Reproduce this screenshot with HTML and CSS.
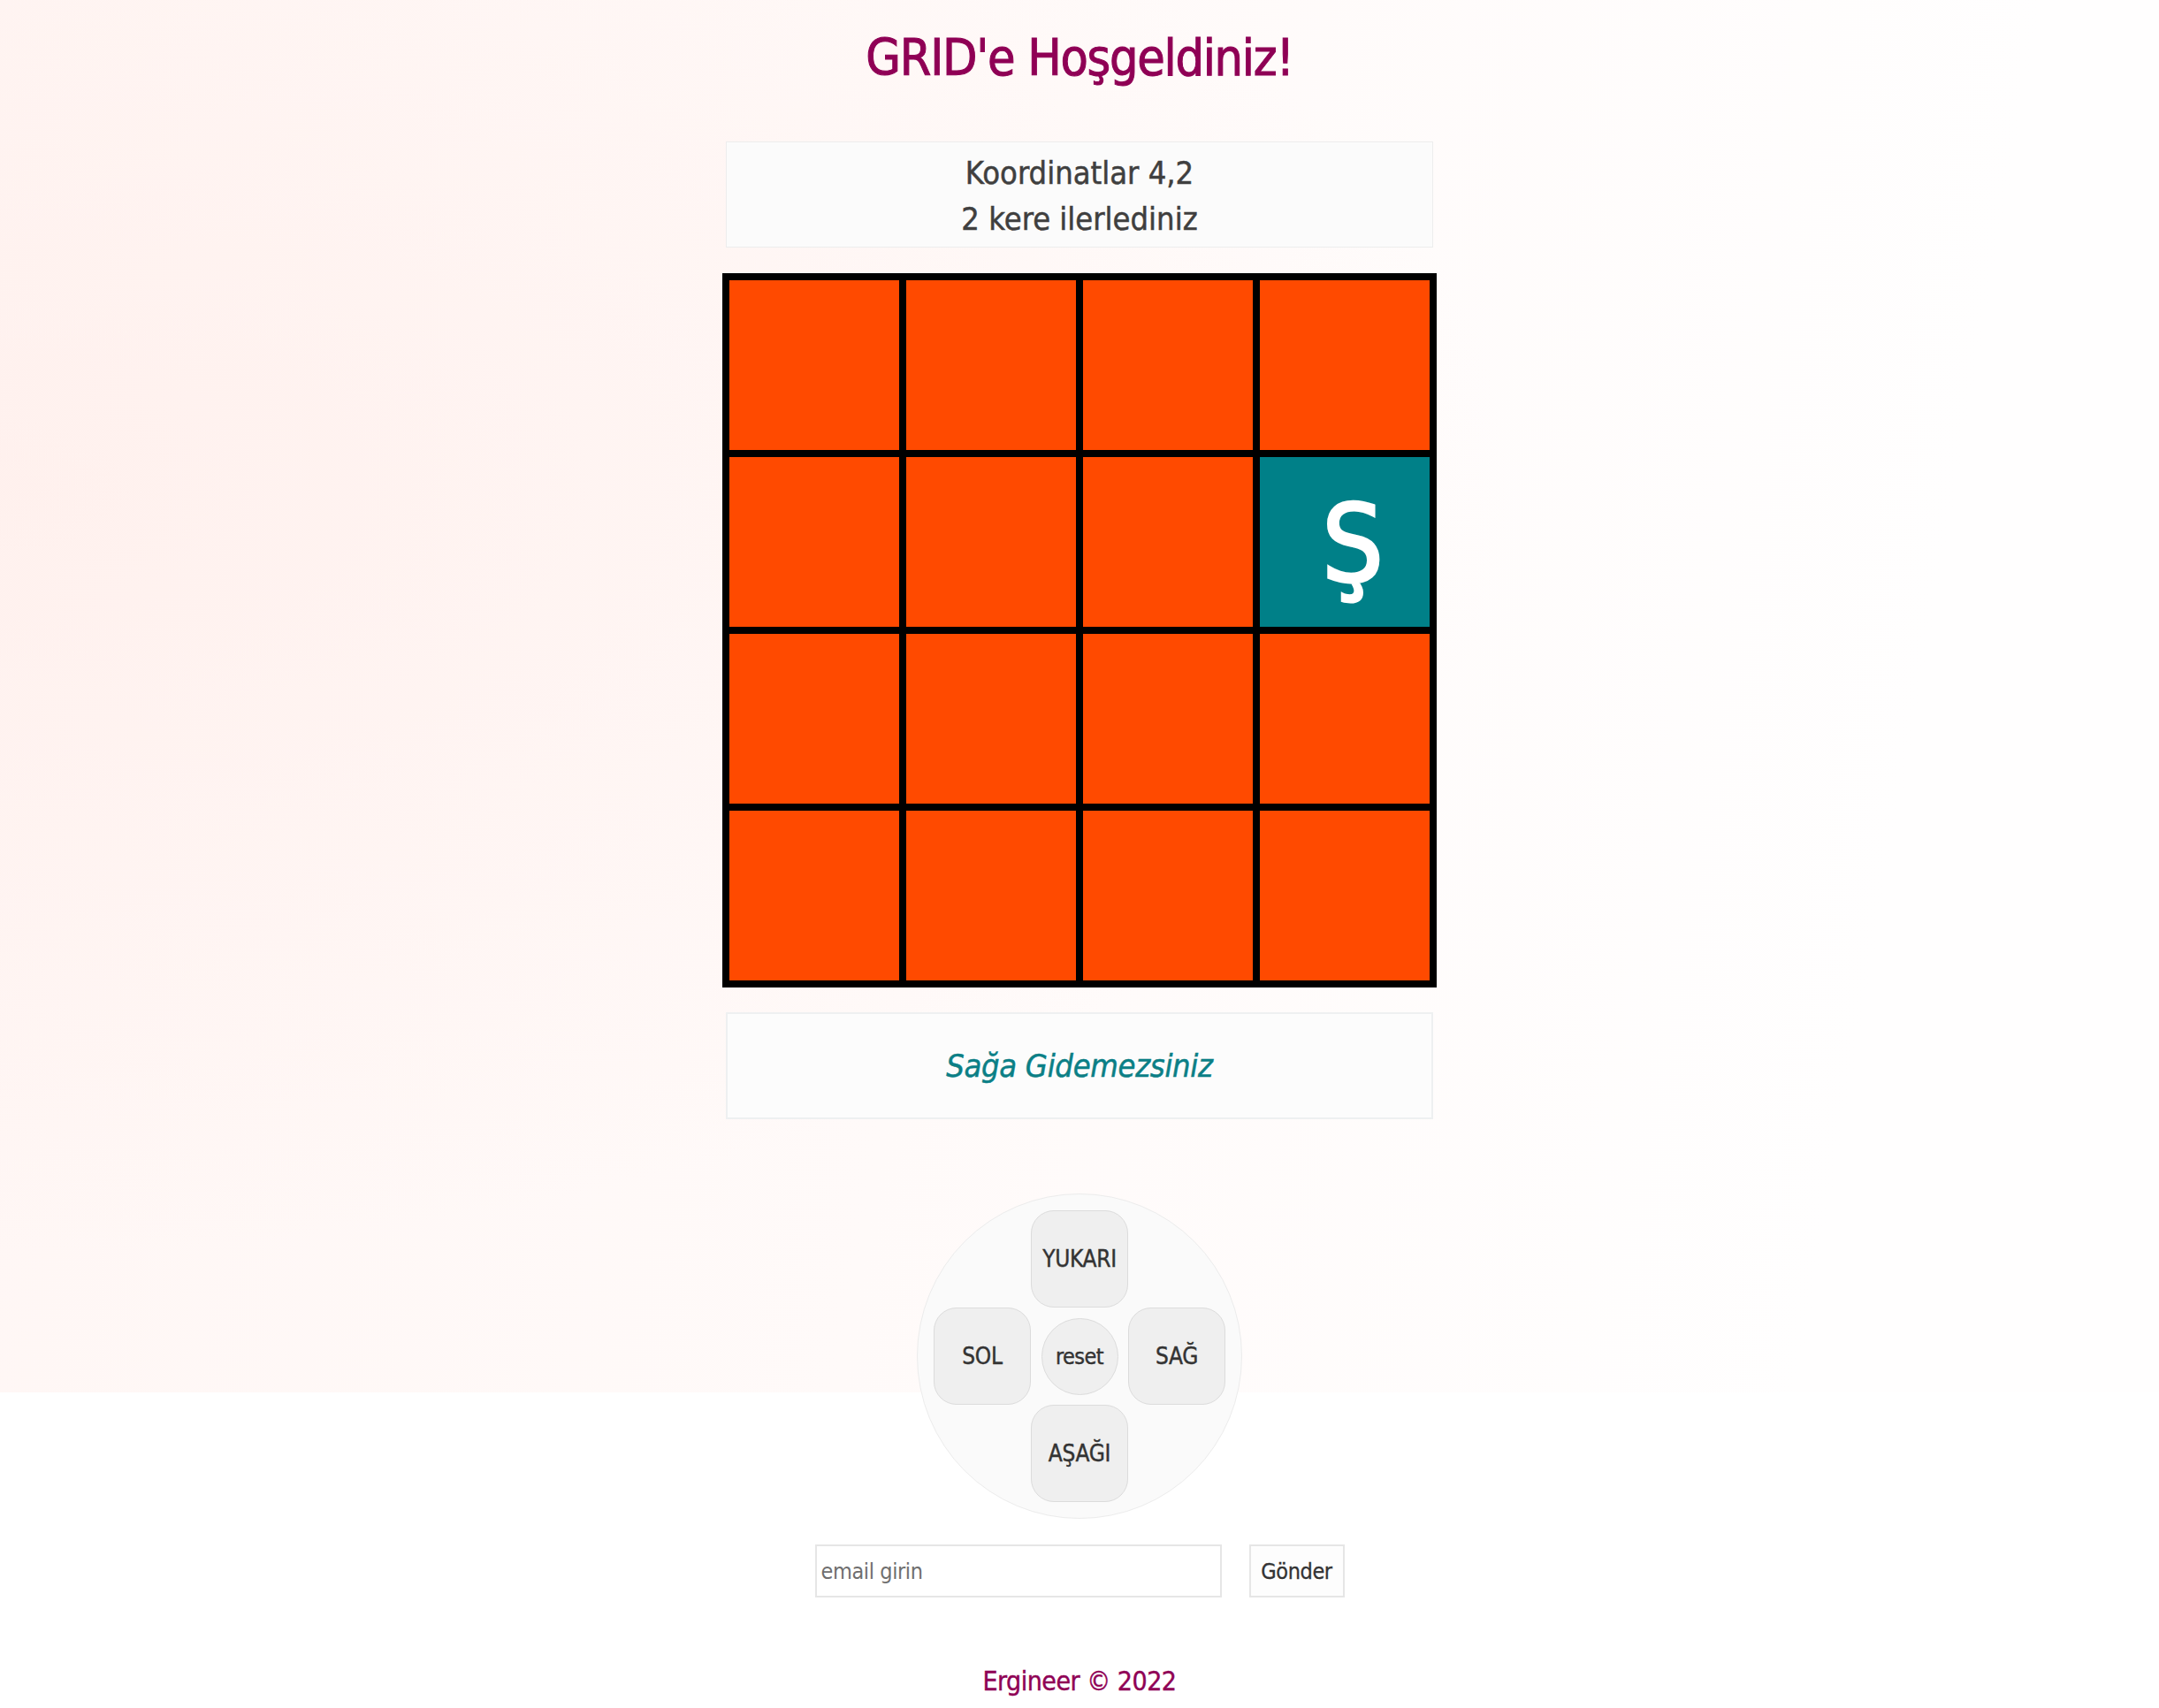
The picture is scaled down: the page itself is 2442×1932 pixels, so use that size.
FILE: index.html
```html
<!DOCTYPE html>
<html lang="tr">
<head>
<meta charset="utf-8">
<title>GRID</title>
<link rel="stylesheet" href="styles.css">
</head>
<body>
<main class="app">
  <h1 class="title">GRID'e Hoşgeldiniz!</h1>
  <div class="info">
    <div class="info-line">Koordinatlar 4,2</div>
    <div class="info-line">2 kere ilerlediniz</div>
  </div>
  <div class="grid">
    <div class="cell"></div><div class="cell"></div><div class="cell"></div><div class="cell"></div>
    <div class="cell"></div><div class="cell"></div><div class="cell"></div><div class="cell active">Ş</div>
    <div class="cell"></div><div class="cell"></div><div class="cell"></div><div class="cell"></div>
    <div class="cell"></div><div class="cell"></div><div class="cell"></div><div class="cell"></div>
  </div>
  <div class="message">Sağa Gidemezsiniz</div>
  <div class="pad">
    <div class="pad-grid">
      <span class="slot"></span>
      <button class="btn" type="button">YUKARI</button>
      <span class="slot"></span>
      <button class="btn" type="button">SOL</button>
      <button class="btn reset" type="button">reset</button>
      <button class="btn" type="button">SAĞ</button>
      <span class="slot"></span>
      <button class="btn" type="button">AŞAĞI</button>
      <span class="slot"></span>
    </div>
  </div>
  <form class="email">
    <input class="email-input" type="email" placeholder="email girin">
    <button class="email-submit" type="button">Gönder</button>
  </form>
  <footer class="footer">Ergineer © 2022</footer>
</main>
</body>
</html>
```

FILE: styles.css
```css
* { box-sizing: border-box; }

html { background: #ffffff; }

body {
  margin: 0;
  font-family: "DejaVu Sans Condensed", "Liberation Sans Narrow", "Roboto", sans-serif;
  color: #3d3d3d;
  background-color: #ffffff;
  background-image:
    radial-gradient(ellipse 70% 55% at 0% 35%, rgba(255, 236, 232, 0.55) 0%, rgba(255, 240, 236, 0) 100%),
    linear-gradient(100deg, #fff6f4 0%, #fffaf9 45%, #fffefe 85%);
  background-repeat: no-repeat;
  background-size: 100% 1575px;
}

.app {
  display: flex;
  flex-direction: column;
  align-items: center;
}

.title {
  margin: 30px 0 0;
  height: 70px;
  font-size: 57px;
  line-height: 70px;
  letter-spacing: -1.3px;
  font-weight: normal;
  color: #8f0055;
  -webkit-text-stroke: 1px #8f0055;
}

.info {
  margin-top: 60px;
  width: 800px;
  height: 120px;
  padding: 9px 0 5px;
  border: 1px solid #ededed;
  background: #fbfbfb;
  text-align: center;
  font-size: 36px;
  line-height: 52px;
  color: #3f3f3f;
  -webkit-text-stroke: 0.5px #3f3f3f;
}

.grid {
  margin-top: 29px;
  display: grid;
  grid-template-columns: repeat(4, 200px);
  grid-template-rows: repeat(4, 200px);
  border: 4px solid #000;
}

.cell {
  border: 4px solid #000;
  background: #ff4a00;
}

.cell.active {
  background: #008088;
  color: #ffffff;
  display: flex;
  align-items: center;
  justify-content: center;
  font-size: 122px;
  line-height: 1;
  padding-left: 18px;
  padding-top: 6px;
  -webkit-text-stroke: 3px #ffffff;
}

.message {
  margin-top: 28px;
  width: 800px;
  height: 121px;
  border: 2px solid #eef0f1;
  background: #fcfcfc;
  display: flex;
  align-items: center;
  justify-content: center;
  font-size: 36px;
  font-style: italic;
  letter-spacing: -0.3px;
  color: #0b7f86;
  -webkit-text-stroke: 0.5px #0b7f86;
}

.pad {
  margin-top: 84px;
  width: 368px;
  height: 368px;
  border-radius: 50%;
  border: 1px solid #ececec;
  background: #fafafa;
  display: flex;
  align-items: center;
  justify-content: center;
}

.pad-grid {
  display: grid;
  grid-template-columns: repeat(3, 110px);
  grid-template-rows: repeat(3, 110px);
}

.btn {
  width: 110px;
  height: 110px;
  border-radius: 26px;
  border: 1px solid #dcdcdc;
  background: #efefef;
  font-family: inherit;
  font-size: 26px;
  letter-spacing: -0.3px;
  color: #333333;
  -webkit-text-stroke: 0.4px #333333;
  padding: 0;
  display: flex;
  align-items: center;
  justify-content: center;
}

.btn.reset {
  width: 87px;
  height: 87px;
  border-radius: 50%;
  justify-self: center;
  align-self: center;
  font-size: 25px;
  letter-spacing: -0.6px;
}

.email {
  margin-top: 29px;
  display: flex;
  gap: 31px;
}

.email-input {
  width: 460px;
  height: 60px;
  border: 2px solid #e6e6e6;
  background: #ffffff;
  padding: 0 0 0 5px;
  font-family: inherit;
  font-size: 25px;
  letter-spacing: -0.4px;
  color: #333333;
  outline: none;
}

.email-input::placeholder { color: #6f6f6f; }

.email-submit {
  width: 108px;
  height: 60px;
  border: 2px solid #e6e6e6;
  background: #fdfdfd;
  padding: 0;
  font-family: inherit;
  font-size: 25px;
  letter-spacing: -0.4px;
  color: #333333;
  -webkit-text-stroke: 0.3px #333333;
}

.footer {
  margin-top: 75px;
  font-size: 30px;
  line-height: 40px;
  letter-spacing: -0.5px;
  color: #8f0055;
  -webkit-text-stroke: 0.4px #8f0055;
}
```
